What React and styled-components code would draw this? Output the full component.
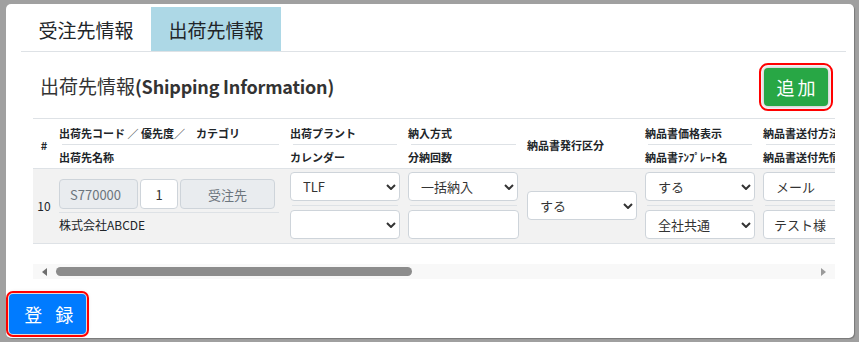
import React from 'react';
import styled, { createGlobalStyle } from 'styled-components';

const GlobalStyle = createGlobalStyle`
  html, body { margin: 0; padding: 0; }
  body {
    background: #a0a0a0;
    font-family: "Noto Sans CJK JP", "Noto Sans", sans-serif;
    color: #212529;
  }
  * { box-sizing: border-box; }
`;

const Frame = styled.div`
  width: 859px;
  height: 342px;
  padding: 4px 5px 4px 6px;
  background: #a0a0a0;
`;

const Panel = styled.div`
  height: 334px;
  background: #fff;
  border-radius: 5px;
  display: flex;
  flex-direction: column;
  overflow: hidden;
  box-shadow: 1px 1px 1px rgba(0, 0, 0, 0.25);
`;

const Content = styled.div`
  padding: 3px 8px 0 15px;
`;

const TabBar = styled.div`
  display: flex;
  border-bottom: 1px solid #dee2e6;
`;

const Tab = styled.div`
  width: 130px;
  height: 44px;
  display: flex;
  align-items: center;
  justify-content: center;
  font-size: 19px;
  color: #212529;
  background: ${(p) => (p.$active ? '#add8e6' : 'transparent')};
`;

const Section = styled.div`
  padding: 0 11px 0 12px;
`;

const HeadingRow = styled.div`
  height: 66px;
  display: flex;
  align-items: center;
  justify-content: space-between;
  padding: 0 7px;
`;

const Heading = styled.h2`
  margin: 0;
  font-size: 19px;
  font-weight: 400;
  color: #333;
`;

const HeadingEn = styled.span`
  font-weight: 700;
  font-size: 18px;
  letter-spacing: -0.2px;
`;

const ActionButton = styled.button`
  width: ${(p) => p.$w}px;
  height: ${(p) => p.$h}px;
  border: none;
  border-radius: 4px;
  background: ${(p) => p.$bg};
  color: #fff;
  font-family: inherit;
  font-size: 18px;
  letter-spacing: ${(p) => p.$ls}px;
  padding: 0 0 0 ${(p) => p.$ls}px;
  outline: 2px solid #ff0000;
  outline-offset: ${(p) => p.$off}px;
  box-shadow: 0 0 5px rgba(0, 0, 0, 0.35);
  display: flex;
  align-items: center;
  justify-content: center;
  margin-top: ${(p) => p.$mt || 0}px;
`;

const TableWrap = styled.div`
  border-top: 1px solid #dee2e6;
  overflow: hidden;
`;

const Table = styled.table`
  border-collapse: collapse;
  table-layout: fixed;
  width: 843px;
`;

const HeadCell = styled.th`
  padding: 5px 4px 2px;
  vertical-align: middle;
  text-align: ${(p) => (p.$center ? 'center' : 'left')};
  font-size: 11px;
  font-weight: 700;
  color: #212529;
  border-bottom: 1px solid #dee2e6;
  white-space: nowrap;
  overflow: hidden;
`;

const HeadLine = styled.div`
  height: 18px;
  line-height: 18px;
  white-space: nowrap;
`;

const Divider = styled.div`
  height: 1px;
  background: #dee2e6;
  margin: ${(p) => p.$m};
`;

const BodyRow = styled.tr`
  background: #f2f2f2;
  border-bottom: 1px solid #dee2e6;
`;

const BodyCell = styled.td`
  padding: ${(p) => (p.$top ? '10px 4px 4px' : '3px 4px 4px')};
  vertical-align: ${(p) => (p.$top ? 'top' : 'middle')};
  text-align: ${(p) => (p.$center ? 'center' : 'left')};
  font-size: 12px;
  color: #212529;
  overflow: hidden;
`;

const InputGroup = styled.div`
  display: flex;
  gap: 2px;
`;

const Field = styled.input`
  width: ${(p) => p.$w}px;
  height: ${(p) => p.$h || 30}px;
  border: 1px solid #ced4da;
  border-radius: 4px;
  background: ${(p) => (p.$ro ? '#e9ecef' : '#fff')};
  color: ${(p) => (p.$ro ? '#6c757d' : '#333')};
  font-family: inherit;
  font-size: 13px;
  padding: 0 ${(p) => (p.$center ? 0 : 10)}px;
  text-align: ${(p) => (p.$center ? 'center' : 'left')};
  outline: none;
`;

const CompanyName = styled.div`
  height: 24px;
  line-height: 24px;
  font-size: 12px;
  white-space: nowrap;
`;

const SelectWrap = styled.div`
  position: relative;
  width: 110px;
`;

const Select = styled.select`
  appearance: none;
  width: 100%;
  height: 29px;
  border: 1px solid #ced4da;
  border-radius: 4px;
  background: #fff;
  color: #333;
  font-family: inherit;
  font-size: 13px;
  padding: 0 18px 0 12px;
  outline: none;
`;

const Chevron = styled.svg`
  position: absolute;
  right: 4px;
  top: 12px;
  width: 10px;
  height: 6px;
  pointer-events: none;
`;

const Scrollbar = styled.div`
  margin-top: 20px;
  height: 15px;
  background: #f8f8f8;
  display: flex;
  align-items: center;
`;

const ArrowBtn = styled.div`
  width: ${(p) => p.$w}px;
  height: 15px;
  display: flex;
  align-items: center;
  justify-content: center;
  flex: none;
`;

const Track = styled.div`
  flex: 1;
  height: 15px;
  display: flex;
  align-items: center;
  padding-left: 1px;
`;

const Thumb = styled.div`
  height: 9px;
  border-radius: 5px;
  background: #8c8c8c;
`;

const Footer = styled.div`
  margin-top: auto;
  padding: 0 0 4px 3px;
`;

function Dropdown({ value, options }) {
  return (
    <SelectWrap>
      <Select defaultValue={value}>
        {options.map((o) => (
          <option key={o} value={o}>
            {o}
          </option>
        ))}
      </Select>
      <Chevron viewBox="0 0 10 6">
        <polyline points="1,1 5,5 9,1" fill="none" stroke="#333" strokeWidth="2" />
      </Chevron>
    </SelectWrap>
  );
}

function Stack({ top, bottom }) {
  return (
    <>
      {top}
      <Divider $m="4px 2px 4px 2px" />
      {bottom}
    </>
  );
}

function TwoLineHead({ a, b }) {
  return (
    <HeadCell>
      <HeadLine>{a}</HeadLine>
      <Divider $m="2px 3px 3px 3px" />
      <HeadLine>{b}</HeadLine>
    </HeadCell>
  );
}

export default function App() {
  return (
    <>
      <GlobalStyle />
      <Frame>
        <Panel>
          <Content>
            <TabBar>
              <Tab>受注先情報</Tab>
              <Tab $active>出荷先情報</Tab>
            </TabBar>
            <Section>
              <HeadingRow>
                <Heading>
                  出荷先情報<HeadingEn>(Shipping Information)</HeadingEn>
                </Heading>
                <ActionButton $w={64} $h={38} $bg="#28a745" $ls={3} $off={3} $mt={4}>
                  追加
                </ActionButton>
              </HeadingRow>
              <TableWrap>
                <Table>
                  <colgroup>
                    <col style={{ width: 22 }} />
                    <col style={{ width: 231 }} />
                    <col style={{ width: 118 }} />
                    <col style={{ width: 119 }} />
                    <col style={{ width: 118 }} />
                    <col style={{ width: 118 }} />
                    <col style={{ width: 117 }} />
                  </colgroup>
                  <thead>
                    <tr>
                      <HeadCell $center>#</HeadCell>
                      <TwoLineHead a="出荷先コード ／ 優先度／　カテゴリ" b="出荷先名称" />
                      <TwoLineHead a="出荷プラント" b="カレンダー" />
                      <TwoLineHead a="納入方式" b="分納回数" />
                      <HeadCell>納品書発行区分</HeadCell>
                      <TwoLineHead a="納品書価格表示" b="納品書ﾃﾝﾌﾟﾚｰﾄ名" />
                      <TwoLineHead a="納品書送付方法" b="納品書送付先情報" />
                    </tr>
                  </thead>
                  <tbody>
                    <BodyRow>
                      <BodyCell $center>10</BodyCell>
                      <BodyCell $top>
                        <InputGroup>
                          <Field $w={79} $ro readOnly defaultValue="S770000" />
                          <Field $w={38} $center readOnly defaultValue="1" />
                          <Field $w={95} $ro $center readOnly defaultValue="受注先" />
                        </InputGroup>
                        <Divider $m="3px 3px 0 0" />
                        <CompanyName>株式会社ABCDE</CompanyName>
                      </BodyCell>
                      <BodyCell>
                        <Stack
                          top={<Dropdown value="TLF" options={['TLF']} />}
                          bottom={<Dropdown value="" options={['']} />}
                        />
                      </BodyCell>
                      <BodyCell>
                        <Stack
                          top={<Dropdown value="一括納入" options={['一括納入']} />}
                          bottom={<Field $w={111} $h={29} defaultValue="" />}
                        />
                      </BodyCell>
                      <BodyCell>
                        <Dropdown value="する" options={['する', 'しない']} />
                      </BodyCell>
                      <BodyCell>
                        <Stack
                          top={<Dropdown value="する" options={['する', 'しない']} />}
                          bottom={<Dropdown value="全社共通" options={['全社共通']} />}
                        />
                      </BodyCell>
                      <BodyCell>
                        <Stack
                          top={<Dropdown value="メール" options={['メール']} />}
                          bottom={<Field $w={110} $h={29} defaultValue="テスト様" />}
                        />
                      </BodyCell>
                    </BodyRow>
                  </tbody>
                </Table>
              </TableWrap>
              <Scrollbar>
                <ArrowBtn $w={22}>
                  <svg width="5" height="8" viewBox="0 0 5 8">
                    <polygon points="5,0 5,8 0,4" fill="#6e6e6e" />
                  </svg>
                </ArrowBtn>
                <Track>
                  <Thumb style={{ width: 356 }} />
                </Track>
                <ArrowBtn $w={23}>
                  <svg width="5" height="8" viewBox="0 0 5 8">
                    <polygon points="0,0 0,8 5,4" fill="#9a9a9a" />
                  </svg>
                </ArrowBtn>
              </Scrollbar>
            </Section>
          </Content>
          <Footer>
            <ActionButton $w={77} $h={40} $bg="#007bff" $ls={-2.5} $off={1}>
              登　録
            </ActionButton>
          </Footer>
        </Panel>
      </Frame>
    </>
  );
}
